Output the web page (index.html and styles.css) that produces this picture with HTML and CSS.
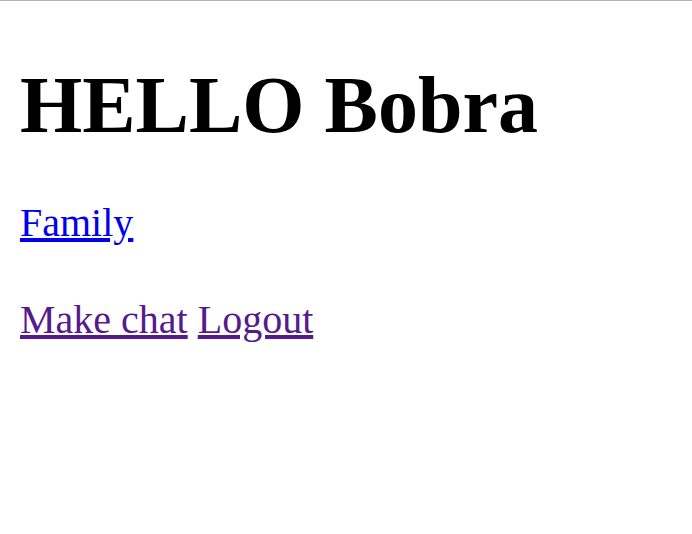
FILE: index.html
```html
<!DOCTYPE html>
<html>
<head>
<meta charset="utf-8">
<link rel="stylesheet" href="styles.css">
</head>
<body>
<h1 class="title">HELLO Bobra</h1>
<p class="line"><a class="link" href="#family">Family</a></p>
<p class="line actions"><a class="link visited" href="#chat">Make chat</a> <a class="link visited" href="#logout">Logout</a></p>
</body>
</html>
```
FILE: styles.css
```css
html {
  border-top: 1px solid #b3b3b3;
  background: #fff;
}
body {
  margin: 20px;
  font-family: "Liberation Serif", "Times New Roman", serif;
  color: #000;
}
.title {
  font-size: 80px;
  font-weight: bold;
  margin: 39px 0 48px;
}
.line {
  font-size: 40px;
  margin: 40px 0;
}
.actions {
  margin-top: 50px;
}
.link {
  color: #0000ee;
  text-decoration: underline;
}
.link.visited {
  color: #551a8b;
}
```
